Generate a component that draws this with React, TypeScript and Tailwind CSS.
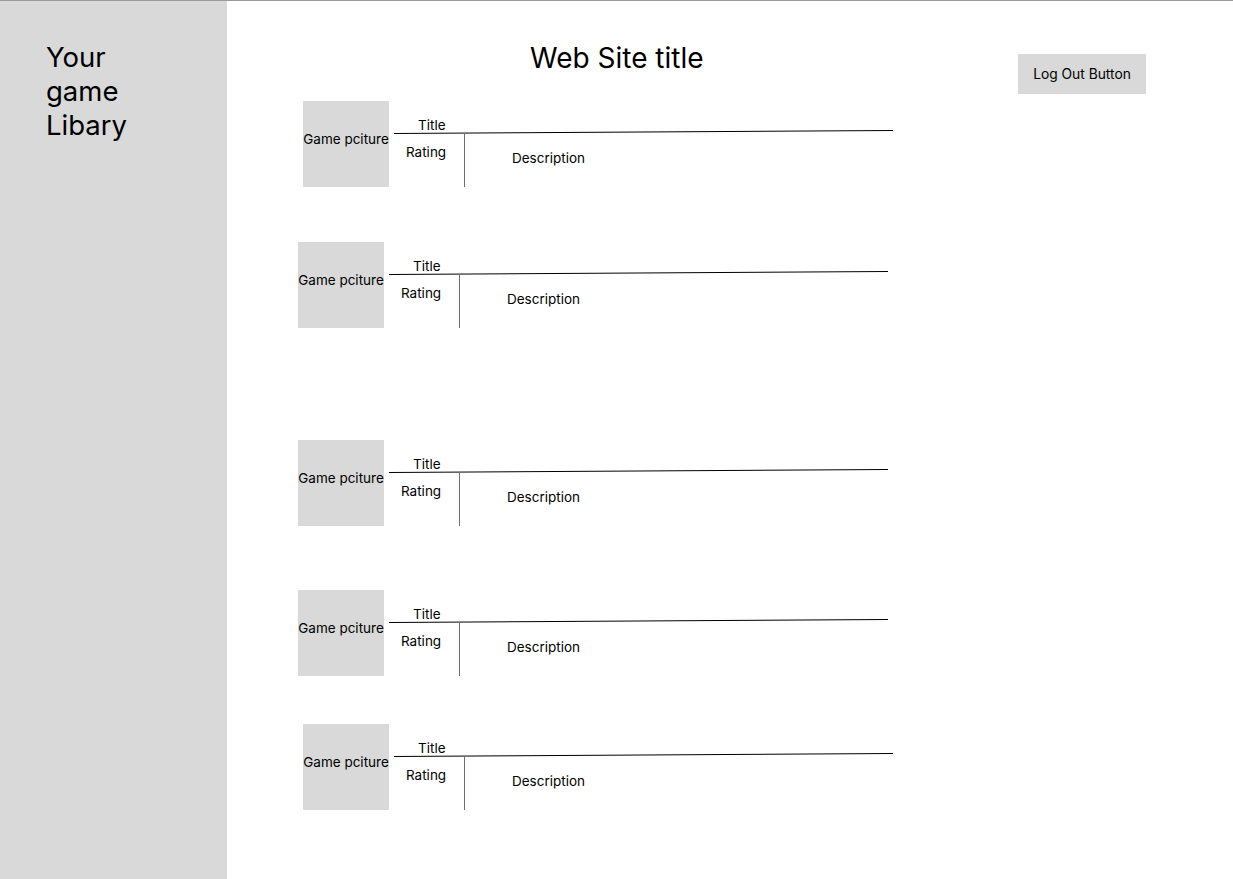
import React from 'react';

interface GameRow {
  id: number;
  offset: string;
  gap: string;
}

const rows: GameRow[] = [
  { id: 1, offset: 'ml-[76px]', gap: 'mt-0' },
  { id: 2, offset: 'ml-[71px]', gap: 'mt-[55px]' },
  { id: 3, offset: 'ml-[71px]', gap: 'mt-[112px]' },
  { id: 4, offset: 'ml-[71px]', gap: 'mt-[64px]' },
  { id: 5, offset: 'ml-[76px]', gap: 'mt-[48px]' },
];

const GameCard: React.FC<{ row: GameRow }> = ({ row }) => (
  <div className={`flex ${row.offset} ${row.gap}`}>
    {/* Picture placeholder */}
    <div className="w-[86px] h-[86px] bg-[#d9d9d9] flex justify-center pt-[30px] text-[13.5px] leading-[16px] whitespace-nowrap">
      Game pciture
    </div>

    <div className="ml-[5px] w-[499px] h-[86px] flex flex-col">
      <div className="h-[32px] shrink-0 flex items-end pl-[24px] text-[13.5px] leading-[16px]">Title</div>
      <svg width="499" height="4" viewBox="0 0 499 4" className="block -mt-[3px] shrink-0">
        <line x1="0" y1="3.5" x2="499" y2="0.5" stroke="#000" strokeWidth="1" />
      </svg>
      <div className="flex-1 flex">
        <div className="w-[71px] border-r border-[#6f6f6f] pl-[12px] pt-[10px] text-[13.5px] leading-[16px]">Rating</div>
        <div className="pl-[47px] pt-[16px] text-[13.5px] leading-[16px]">Description</div>
      </div>
    </div>
  </div>
);

export default function App() {
  return (
    <div
      className="w-[1233px] h-[879px] flex border-t border-[#9a9a9a] bg-white text-black overflow-hidden"
      style={{ fontFamily: 'Inter, "Noto Sans", sans-serif' }}
    >
      {/* Sidebar */}
      <aside className="w-[227px] h-full bg-[#d9d9d9] shrink-0 pl-[46px] pt-[39px]">
        <div className="w-[100px] text-[27.5px] leading-[34px]">Your game Libary</div>
      </aside>

      {/* Main */}
      <main className="flex-1 flex flex-col">
        <header className="h-[100px] flex items-start">
          <h1 className="ml-[303px] mt-[40px] text-[28px] leading-[34px] font-normal">Web Site title</h1>
          <button className="ml-auto mr-[87px] mt-[53px] w-[128px] h-[40px] pt-[1px] bg-[#d9d9d9] text-[13.8px]">
            Log Out Button
          </button>
        </header>

        {rows.map((row) => (
          <GameCard key={row.id} row={row} />
        ))}
      </main>
    </div>
  );
}
